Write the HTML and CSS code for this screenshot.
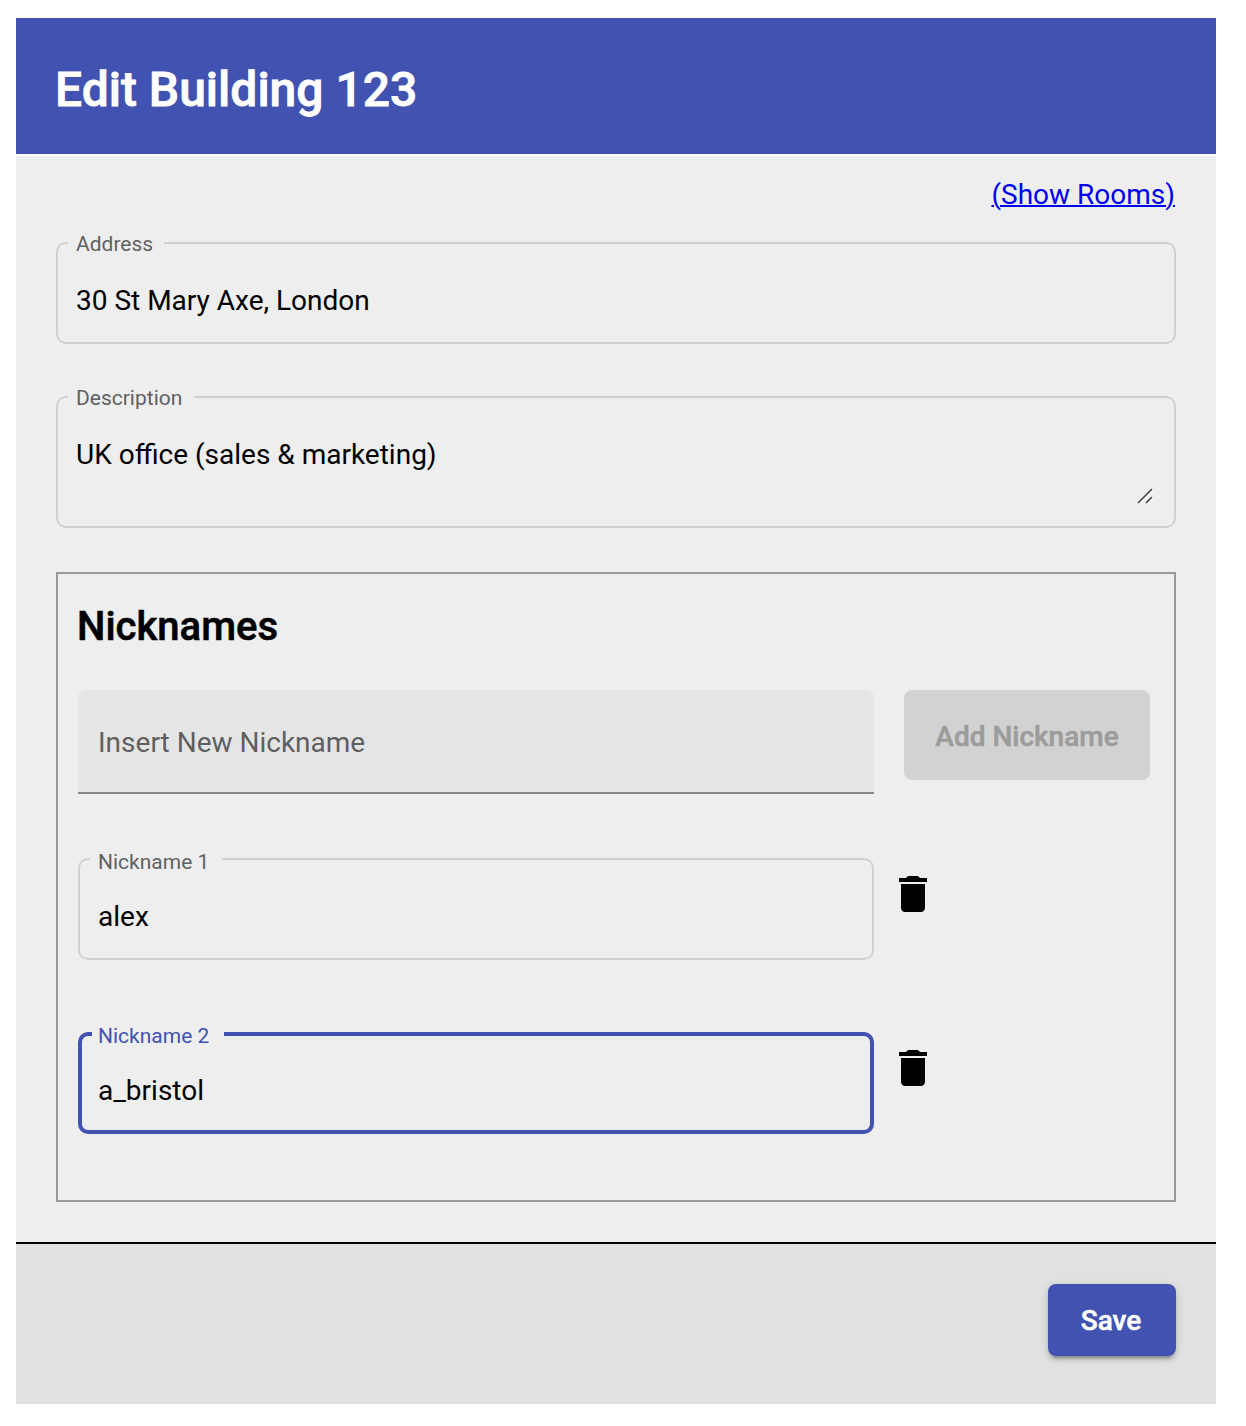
FILE: index.html
```html
<!DOCTYPE html>
<html lang="en">
<head>
<meta charset="utf-8">
<title>Edit Building 123</title>
<link rel="stylesheet" href="styles.css">
</head>
<body>
<form class="dialog">
  <header class="dialog-header"><h1 class="dialog-title">Edit Building 123</h1></header>
  <main class="dialog-content">
    <div class="links"><a class="rooms-link" href="#">(Show Rooms)</a></div>
    <fieldset class="outlined">
      <legend class="label label-address">Address</legend>
      <input class="value" type="text" aria-label="Address" value="30 St Mary Axe, London">
    </fieldset>
    <fieldset class="outlined description">
      <legend class="label label-description">Description</legend>
      <textarea class="value value-area" aria-label="Description">UK office (sales &amp; marketing)</textarea>
      <svg class="grip" viewBox="0 0 18 18" aria-hidden="true"><path d="M3 17.5 17.5 3M11 17.5 17.5 11" stroke="#fff"/><path d="M2 16 16 2M10 16 16 10" stroke="#444" stroke-width="1.6"/></svg>
    </fieldset>
    <section class="nicknames">
      <h2 class="section-title">Nicknames</h2>
      <div class="row add-row">
        <input class="filled" type="text" placeholder="Insert New Nickname">
        <button class="button add-button" type="button" disabled>Add Nickname</button>
      </div>
      <div class="row">
        <fieldset class="outlined">
          <legend class="label label-nickname">Nickname 1</legend>
          <input class="value" type="text" aria-label="Nickname 1" value="alex">
        </fieldset>
        <svg class="delete" viewBox="0 0 24 24" role="img" aria-label="Delete"><path d="M6 19c0 1.1.9 2 2 2h8c1.1 0 2-.9 2-2V7H6v12zM19 4h-3.5l-.71-.71c-.18-.18-.44-.29-.7-.29H9.91c-.26 0-.52.11-.7.29L8.5 4H5v2h14V4z"/></svg>
      </div>
      <div class="row">
        <fieldset class="outlined focused">
          <legend class="label label-nickname">Nickname 2</legend>
          <input class="value" type="text" aria-label="Nickname 2" value="a_bristol">
        </fieldset>
        <svg class="delete" viewBox="0 0 24 24" role="img" aria-label="Delete"><path d="M6 19c0 1.1.9 2 2 2h8c1.1 0 2-.9 2-2V7H6v12zM19 4h-3.5l-.71-.71c-.18-.18-.44-.29-.7-.29H9.91c-.26 0-.52.11-.7.29L8.5 4H5v2h14V4z"/></svg>
      </div>
    </section>
  </main>
  <footer class="dialog-actions"><button class="button save-button" type="button">Save</button></footer>
</form>
</body>
</html>
```
FILE: styles.css
```css
* { box-sizing: border-box; }
body {
  margin: 0;
  padding: 18px 30px 22px 16px;
  background: #fff;
  color: #000;
  font: 400 28px/32px Roboto, sans-serif;
}
.dialog { width: 1200px; }
.dialog-header {
  display: flex;
  align-items: center;
  height: 136px;
  padding: 8px 39px 0;
  margin-bottom: 2px;
  background: #4252b0;
  color: #fff;
}
.dialog-title {
  margin: 0;
  font-size: 48px;
  font-weight: 500;
  line-height: 64px;
  -webkit-text-stroke: 0.8px currentColor;
}
.dialog-content {
  height: 1086px;
  padding: 23px 40px 0;
  background: #eee;
}
.links { display: flex; justify-content: flex-end; height: 63px; padding-right: 1px; }
.rooms-link { color: #0000ee; text-decoration-thickness: 2px; }
.outlined {
  position: relative;
  min-width: 0;
  height: 102px;
  margin: 0;
  padding: 0 18px 0 10px;
  border: 2px solid #d0d0d0;
  border-radius: 10px;
}
.label {
  height: 2px;
  padding: 0 0 0 8px;
  color: #616161;
  font-size: 21px;
  line-height: 5px;
  white-space: nowrap;
}
.label-address { width: 96px; }
.label-description { width: 126px; }
.label-nickname { width: 132px; line-height: 9px; }
.value {
  display: block;
  width: 100%;
  height: 34px;
  margin: 39px 0 0;
  padding: 0 0 0 8px;
  border: 0;
  outline: 0;
  background: none;
  color: #000;
  font: inherit;
}
.description { height: 132px; margin-top: 52px; }
.value-area { height: 62px; padding-top: 2px; resize: none; overflow: hidden; }
.grip {
  position: absolute;
  right: 20px;
  bottom: 21px;
  width: 18px;
  height: 18px;
  fill: none;
}
.nicknames {
  height: 630px;
  margin-top: 44px;
  padding: 29px 20px 0;
  border: 2px solid #999;
}
.section-title {
  margin: 0 0 39px -1px;
  font-size: 40px;
  font-weight: 500;
  line-height: 48px;
  -webkit-text-stroke: 0.6px currentColor;
}
.row { display: flex; align-items: flex-start; height: 102px; margin-bottom: 72px; }
.add-row { height: 104px; margin-bottom: 64px; gap: 30px; }
.row .outlined { width: 796px; }
.filled {
  width: 796px;
  height: 104px;
  padding: 2px 20px 0;
  border: 0;
  border-bottom: 2px solid #868686;
  border-radius: 8px 8px 0 0;
  background: #e5e5e5;
  font: inherit;
}
.filled::placeholder { color: #5f5f5f; opacity: 1; }
.focused { border: 4px solid #4252b0; padding-left: 10px; }
.focused .label { height: 4px; padding-left: 6px; color: #4252b0; }
.focused .value { margin-top: 37px; padding-left: 6px; }
.delete { width: 48px; height: 48px; margin: 12px 0 0 15px; }
.button {
  border: 0;
  border-radius: 8px;
  font: 500 28px/32px Roboto, sans-serif;
  -webkit-text-stroke: 0.5px currentColor;
}
.add-button {
  width: 246px;
  height: 90px;
  padding: 4px 0 0;
  background: #d2d2d2;
  color: #9c9c9c;
}
.dialog-actions {
  display: flex;
  justify-content: flex-end;
  height: 162px;
  padding: 40px 40px 0;
  border-top: 2px solid #000;
  background: #e1e1e1;
}
.save-button {
  width: 128px;
  height: 72px;
  padding: 2px 2px 0 0;
  background: #4252b0;
  color: #fff;
  box-shadow: 0 6px 2px -4px rgba(0,0,0,.2), 0 4px 4px rgba(0,0,0,.14), 0 2px 10px rgba(0,0,0,.12);
}
```
